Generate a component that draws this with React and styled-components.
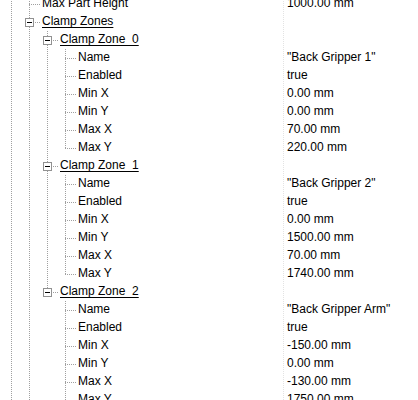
import React from 'react';
import styled, { createGlobalStyle } from 'styled-components';

const GlobalStyle = createGlobalStyle`
  html, body {
    margin: 0;
    padding: 0;
    background: #fff;
    overflow: hidden;
  }
  body {
    font-family: "Liberation Sans", Arial, sans-serif;
    font-size: 12px;
    color: #000;
  }
`;

const LINE = '#a0a0a0';
const vDots = `repeating-linear-gradient(to bottom, ${LINE} 0 1px, transparent 1px 2px)`;
const hDots = `repeating-linear-gradient(to right, ${LINE} 0 1px, transparent 1px 2px)`;

const Grid = styled.div`
  display: flex;
  flex-direction: column;
  margin-top: -5px;
  width: 418px;
`;

const Row = styled.div`
  display: flex;
  height: 18px;
`;

const TreePart = styled.div`
  flex: none;
  width: 283px;
  display: flex;
  align-items: stretch;
  overflow: hidden;
`;

const Divider = styled.div`
  flex: none;
  width: 1px;
  background-image: repeating-linear-gradient(to bottom, #e3e3e3 0 1px, transparent 1px 2px);
`;

const Guide = styled.span`
  flex: none;
  width: 18px;
  background-image: ${(p) => (p.$pipe ? vDots : 'none')};
  background-size: 1px 100%;
  background-position: 11px 0;
  background-repeat: no-repeat;
`;

const Joint = styled.span`
  position: relative;
  flex: none;
  width: 24px;
  background-image: ${vDots}, ${hDots};
  background-size: 1px ${(p) => (p.$last ? '10px' : '100%')}, 11px 1px;
  background-position: 11px 0, 11px 9px;
  background-repeat: no-repeat;
`;

const Toggle = styled.span`
  position: absolute;
  left: 7px;
  top: 5px;
  width: 7px;
  height: 7px;
  border: 1px solid #919191;
  background: #fff;
  display: flex;
  align-items: center;
  justify-content: center;

  &::after {
    content: "";
    width: 5px;
    height: 1px;
    background: #000;
  }
`;

const Label = styled.span`
  line-height: 17px;
  white-space: nowrap;
  text-decoration: ${(p) => (p.$group ? 'underline' : 'none')};
  text-underline-offset: 2px;
`;

const Value = styled.div`
  padding-left: 3px;
  line-height: 17px;
  white-space: nowrap;
`;

const zone = (name, title, minX, minY, maxX, maxY) => ({
  label: name,
  children: [
    { label: 'Name', value: `"${title}"` },
    { label: 'Enabled', value: 'true' },
    { label: 'Min X', value: minX },
    { label: 'Min Y', value: minY },
    { label: 'Max X', value: maxX },
    { label: 'Max Y', value: maxY },
  ],
});

const tree = [
  { label: 'Max Part Height', value: '1000.00 mm' },
  {
    label: 'Clamp Zones',
    more: true,
    children: [
      zone('Clamp Zone_0', 'Back Gripper 1', '0.00 mm', '0.00 mm', '70.00 mm', '220.00 mm'),
      zone('Clamp Zone_1', 'Back Gripper 2', '0.00 mm', '1500.00 mm', '70.00 mm', '1740.00 mm'),
      zone('Clamp Zone_2', 'Back Gripper Arm', '-150.00 mm', '0.00 mm', '-130.00 mm', '1750.00 mm'),
    ],
  },
];

// flatten the tree into rows with their guide-line columns
function flatten(nodes, pipes, out) {
  nodes.forEach((node, i) => {
    const last = i === nodes.length - 1 && !node.more;
    out.push({ node, pipes, last });
    if (node.children) flatten(node.children, [...pipes, !last], out);
  });
  return out;
}

const rows = flatten(tree, [true], []);

export default function App() {
  return (
    <>
      <GlobalStyle />
      <Grid>
        {rows.map(({ node, pipes, last }, i) => (
          <Row key={i}>
            <TreePart>
              {pipes.map((p, j) => (
                <Guide key={j} $pipe={p} />
              ))}
              <Joint $last={last}>{node.children && <Toggle />}</Joint>
              <Label $group={!!node.children}>{node.label}</Label>
            </TreePart>
            <Divider />
            <Value>{node.value || ''}</Value>
          </Row>
        ))}
      </Grid>
    </>
  );
}
